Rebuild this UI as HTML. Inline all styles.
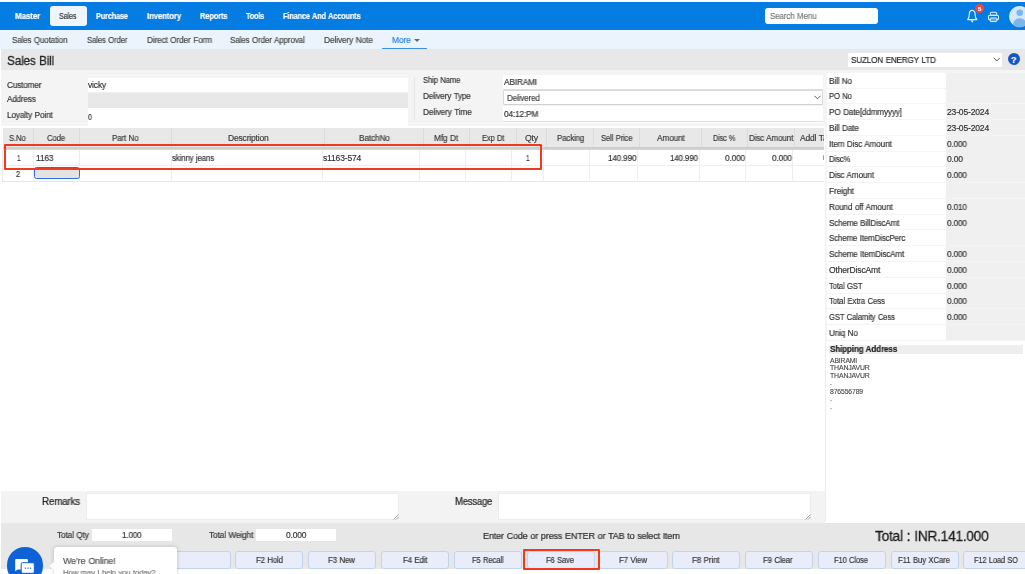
<!DOCTYPE html>
<html>
<head>
<meta charset="utf-8">
<title>Sales Bill</title>
<style>
*{box-sizing:border-box;margin:0;padding:0}
html,body{width:1025px;height:574px;overflow:hidden;background:#fff}
body{font-family:"Liberation Sans",sans-serif;font-size:9px;color:#3a3a3a;position:relative}
.a{position:absolute}
.t{position:absolute;white-space:nowrap;word-spacing:0.5px;transform-origin:0 50%;will-change:transform;-webkit-text-stroke:0.02em currentColor}
.btn{position:absolute;top:551.3px;width:68.3px;height:17.4px;background:#e8edf9;border:1px solid #c2d3f0;border-radius:3px}
.vb{position:absolute;top:128px;width:1px;height:19px;background:#dcdcdc}
.rb{position:absolute;top:149.8px;width:1px;height:32px;background:#eeeeee}
.rl{position:absolute;left:827.3px;width:118.7px;height:14.9px;background:#fff}
.rv{position:absolute;left:946px;width:79px;height:15.2px;background:#f0f0f0}

</style>
</head>
<body>
<div class="a" style="left:0;top:2px;width:1025px;height:27.8px;background:#047ce2"></div>
<div class="a" style="left:50px;top:6px;width:37px;height:20px;background:#eef5fd;border-radius:3px"></div>
<div class="a" style="left:765px;top:8px;width:113px;height:16px;background:#fff;border-radius:3px"></div>
<svg class="a" style="left:965px;top:8px" width="16" height="18" viewBox="0 0 16 18"><g transform="translate(0,2.4) scale(1,1.09) translate(0,-2.4)"><path d="M7.2 2.4 C4.9 2.4 4.2 4.6 4.2 6.6 C4.2 8.8 3.6 9.9 2.6 10.9 L11.8 10.9 C10.8 9.9 10.2 8.8 10.2 6.6 C10.2 4.6 9.5 2.4 7.2 2.4 Z" fill="none" stroke="#e6f0fb" stroke-width="1.1" stroke-linejoin="round"/><path d="M5.6 11.5 L7.2 13.7 L8.8 11.5 Z" fill="#e6f0fb"/></g></svg>
<div class="a" style="left:975.2px;top:4.1px;width:8.8px;height:8.8px;border-radius:50%;background:#f2453d"></div>
<svg class="a" style="left:987px;top:10px" width="14" height="14" viewBox="0 0 14 14"><rect x="3.4" y="2.3" width="6.2" height="3" rx="0.6" fill="none" stroke="#e6f0fb" stroke-width="1"/><rect x="1.5" y="5.3" width="10" height="4.4" rx="1.3" fill="none" stroke="#e6f0fb" stroke-width="1.1"/><rect x="3.2" y="8" width="6.6" height="3.6" rx="0.6" fill="#5aa3ea" stroke="#e6f0fb" stroke-width="1"/></svg>
<svg class="a" style="left:1009.3px;top:5.8px" width="16" height="22" viewBox="0 0 16 22"><defs><clipPath id="av"><circle cx="10.7" cy="10.6" r="10.6"/></clipPath></defs><circle cx="10.7" cy="10.6" r="10.6" fill="#d4e8fb"/><g clip-path="url(#av)"><circle cx="10.7" cy="6.8" r="3.3" fill="#7db6ef"/><ellipse cx="10.7" cy="17.9" rx="6.6" ry="5.6" fill="#7db6ef"/></g></svg>
<div class="a" style="left:0;top:29.8px;width:1025px;height:19.5px;background:#ebf4fc"></div>
<div class="a" style="left:413.5px;top:38.8px;width:0;height:0;border-left:3.1px solid transparent;border-right:3.1px solid transparent;border-top:3.3px solid #666b72"></div>
<div class="a" style="left:382.1px;top:47.7px;width:44.8px;height:1.4px;background:#3b8eea;border-radius:1px"></div>
<div class="a" style="left:1px;top:49.3px;width:1024px;height:21.1px;background:#e8e8e8"></div>
<div class="a" style="left:848px;top:52.9px;width:154px;height:14.1px;background:#fff;border-radius:1.5px"></div>
<svg class="a" style="left:993.4px;top:56.4px" width="8" height="7" viewBox="0 0 8 7"><path d="M0.8 1.8 L3.8 5 L6.8 1.8" fill="none" stroke="#4a4a4a" stroke-width="0.9"/></svg>
<div class="a" style="left:1007.8px;top:52.8px;width:12.4px;height:12.4px;border-radius:50%;background:#1457c8"></div>
<div class="a" style="left:1px;top:70.4px;width:824px;height:55.2px;background:#f4f4f4"></div>
<div class="a" style="left:87.8px;top:77.6px;width:320.6px;height:14.4px;background:#fff"></div>
<div class="a" style="left:87.8px;top:92px;width:320.6px;height:15.7px;background:#e8e8e8;border-top:1px solid #efefef"></div>
<div class="a" style="left:87.8px;top:107.7px;width:320.6px;height:17.9px;background:#fff"></div>
<div class="a" style="left:414.4px;top:76.9px;width:1px;height:42.8px;background:#e4e4e4"></div>
<div class="a" style="left:503px;top:74.5px;width:320.3px;height:15.3px;background:#fff;border-bottom:1.1px solid #dedede"></div>
<div class="a" style="left:503px;top:89.8px;width:320.3px;height:15.5px;background:#fff;border:1px solid #d8d8d8;border-bottom-color:#d0d0d0;border-radius:1.5px"></div>
<svg class="a" style="left:813.2px;top:94px" width="9" height="7" viewBox="0 0 9 7"><path d="M1.5 1.8 L4.5 4.9 L7.5 1.8" fill="none" stroke="#4a4a4a" stroke-width="0.9"/></svg>
<div class="a" style="left:503px;top:106.2px;width:320.3px;height:15.6px;background:#fff;border-bottom:1px solid #e0e0e0"></div>
<div class="a" style="left:503px;top:121.8px;width:320.3px;height:1.6px;background:#fff"></div>
<div class="a" style="left:2.6px;top:128px;width:821.4px;height:19px;background:#e8e8e8"></div>
<div class="vb" style="left:32.9px"></div>
<div class="vb" style="left:79.4px"></div>
<div class="vb" style="left:170.8px"></div>
<div class="vb" style="left:324.1px"></div>
<div class="vb" style="left:423.0px"></div>
<div class="vb" style="left:468.8px"></div>
<div class="vb" style="left:515.8px"></div>
<div class="vb" style="left:546.3px"></div>
<div class="vb" style="left:592.8px"></div>
<div class="vb" style="left:639.0px"></div>
<div class="vb" style="left:700.7px"></div>
<div class="vb" style="left:746.6px"></div>
<div class="vb" style="left:794.3px"></div>
<div class="a" style="left:2.6px;top:146.8px;width:821.4px;height:3px;background:linear-gradient(#cbcbcb,#d6d6d6)"></div>
<div class="a" style="left:2.2px;top:149.8px;width:821.8px;height:32.1px;background:#fff;border-left:1px solid #e8e8e8;border-bottom:1px solid #e6e6e6"></div>
<div class="a" style="left:2.6px;top:165.3px;width:821.4px;height:1px;background:#eeeeee"></div>
<div class="rb" style="left:32.9px"></div>
<div class="rb" style="left:79.4px"></div>
<div class="rb" style="left:170.8px"></div>
<div class="rb" style="left:321.9px"></div>
<div class="rb" style="left:419.1px"></div>
<div class="rb" style="left:465.3px"></div>
<div class="rb" style="left:511.1px"></div>
<div class="rb" style="left:543.1px"></div>
<div class="rb" style="left:589.3px"></div>
<div class="rb" style="left:637.0px"></div>
<div class="rb" style="left:698.8px"></div>
<div class="rb" style="left:745.2px"></div>
<div class="rb" style="left:792.0px"></div>
<div class="a" style="left:34.1px;top:166.8px;width:45.9px;height:12.7px;background:#e3e3e3;border:1.3px solid #2f6ddf;border-radius:2.5px"></div>
<div class="a" style="left:822.8px;top:155.2px;width:1.2px;height:4.4px;background:#9a9a9a;border-radius:1px"></div>
<div class="a" style="left:3.9px;top:144.2px;width:537.8px;height:25.6px;border:2px solid #f03a1f;border-radius:1px"></div>
<div class="a" style="left:825.4px;top:70.4px;width:199.6px;height:452.1px;background:#fff;border-left:1.6px solid #ededed"></div>
<div class="a" style="left:825.4px;top:70.4px;width:199.6px;height:271px;background:#f4f4f4"></div>
<div class="rl" style="top:72.7px"></div><div class="rv" style="top:72.5px"></div>
<div class="rl" style="top:88.5px"></div><div class="rv" style="top:88.3px"></div>
<div class="rl" style="top:104.2px"></div><div class="rv" style="top:104.0px"></div>
<div class="rl" style="top:120.0px"></div><div class="rv" style="top:119.8px"></div>
<div class="rl" style="top:135.8px"></div><div class="rv" style="top:135.6px"></div>
<div class="rl" style="top:151.6px"></div><div class="rv" style="top:151.4px"></div>
<div class="rl" style="top:167.3px"></div><div class="rv" style="top:167.1px"></div>
<div class="rl" style="top:183.1px"></div><div class="rv" style="top:182.9px"></div>
<div class="rl" style="top:198.9px"></div><div class="rv" style="top:198.7px"></div>
<div class="rl" style="top:214.6px"></div><div class="rv" style="top:214.4px"></div>
<div class="rl" style="top:230.4px"></div><div class="rv" style="top:230.2px"></div>
<div class="rl" style="top:246.2px"></div><div class="rv" style="top:246.0px"></div>
<div class="rl" style="top:261.9px"></div><div class="rv" style="top:261.7px"></div>
<div class="rl" style="top:277.7px"></div><div class="rv" style="top:277.5px"></div>
<div class="rl" style="top:293.5px"></div><div class="rv" style="top:293.3px"></div>
<div class="rl" style="top:309.2px"></div><div class="rv" style="top:309.1px"></div>
<div class="rl" style="top:325.0px"></div><div class="rv" style="top:324.8px"></div>
<div class="a" style="left:827.3px;top:341px;width:197.7px;height:3.4px;background:#fff"></div>
<div class="a" style="left:829px;top:344.6px;width:194.4px;height:9.7px;background:#eeeeee"></div>
<div class="a" style="left:1px;top:491.4px;width:824px;height:31.2px;background:#f3f3f3"></div>
<div class="a" style="left:85.5px;top:493.3px;width:313px;height:27.1px;background:#fff;border:1px solid #ededed"></div>
<div class="a" style="left:497.6px;top:493.3px;width:313.3px;height:27.1px;background:#fff;border:1px solid #ededed"></div>
<svg class="a" style="left:392.5px;top:514.2px" width="6" height="6" viewBox="0 0 6 6"><path d="M0.5 5.5 L5.5 0.5 M3 5.5 L5.5 3" stroke="#777" stroke-width="0.7" fill="none"/></svg>
<svg class="a" style="left:805px;top:514.2px" width="6" height="6" viewBox="0 0 6 6"><path d="M0.5 5.5 L5.5 0.5 M3 5.5 L5.5 3" stroke="#777" stroke-width="0.7" fill="none"/></svg>
<div class="a" style="left:1px;top:522.5px;width:1024px;height:46.9px;background:#e7e7e7"></div>
<div class="a" style="left:92px;top:529.4px;width:79.9px;height:11.4px;background:#fff"></div>
<div class="a" style="left:256.3px;top:529.4px;width:79.8px;height:11.4px;background:#fff"></div>
<div class="btn" style="left:162.4px"></div>
<div class="btn" style="left:235.2px"></div>
<div class="btn" style="left:308.0px"></div>
<div class="btn" style="left:380.9px"></div>
<div class="btn" style="left:453.7px"></div>
<div class="btn" style="left:526.5px"></div>
<div class="btn" style="left:599.3px"></div>
<div class="btn" style="left:672.1px"></div>
<div class="btn" style="left:745.0px"></div>
<div class="btn" style="left:817.8px"></div>
<div class="btn" style="left:890.6px"></div>
<div class="btn" style="left:963.4px"></div>
<div class="a" style="left:523.2px;top:549.3px;width:76.6px;height:21.1px;border:2px solid #f03a1f;border-radius:1px"></div>
<!-- text layer -->
<div class="t" id="x0" style="left:15.3px;top:10.0px;font-size:8.5px;line-height:12px;height:12px;color:#fff;letter-spacing:-0.17px;transform:scaleX(0.949);font-weight:bold">Master</div>
<div class="t" id="x1" style="left:59.3px;top:10.0px;font-size:8.5px;line-height:12px;height:12px;color:#333;letter-spacing:-0.17px;transform:scaleX(0.850)">Sales</div>
<div class="t" id="x2" style="left:96.0px;top:10.0px;font-size:8.5px;line-height:12px;height:12px;color:#fff;letter-spacing:-0.17px;transform:scaleX(0.863);font-weight:bold">Purchase</div>
<div class="t" id="x3" style="left:146.8px;top:10.0px;font-size:8.5px;line-height:12px;height:12px;color:#fff;letter-spacing:-0.17px;transform:scaleX(0.927);font-weight:bold">Inventory</div>
<div class="t" id="x4" style="left:199.8px;top:10.0px;font-size:8.5px;line-height:12px;height:12px;color:#fff;letter-spacing:-0.17px;transform:scaleX(0.887);font-weight:bold">Reports</div>
<div class="t" id="x5" style="left:246.3px;top:10.0px;font-size:8.5px;line-height:12px;height:12px;color:#fff;letter-spacing:-0.17px;transform:scaleX(0.842);font-weight:bold">Tools</div>
<div class="t" id="x6" style="left:283.0px;top:10.0px;font-size:8.5px;line-height:12px;height:12px;color:#fff;letter-spacing:-0.17px;transform:scaleX(0.871);font-weight:bold">Finance And Accounts</div>
<div class="t" id="x7" style="left:769.6px;top:10.0px;font-size:8.5px;line-height:12px;height:12px;color:#777;letter-spacing:-0.17px;transform:scaleX(0.946)">Search Menu</div>
<div class="t" id="x8" style="left:977.8px;top:5.0px;font-size:6px;line-height:8px;height:8px;color:#fff;letter-spacing:-0.12px;transform:scaleX(0.987);font-weight:bold">5</div>
<div class="t" id="x9" style="left:1011.1px;top:53.0px;font-size:9.5px;line-height:13px;height:13px;color:#fff;letter-spacing:-0.19px;transform:scaleX(0.929);font-weight:bold">?</div>
<div class="t" id="x10" style="left:12.3px;top:34.0px;font-size:8.5px;line-height:12px;height:12px;color:#444;letter-spacing:-0.17px;transform:scaleX(0.947)">Sales Quotation</div>
<div class="t" id="x11" style="left:86.8px;top:34.0px;font-size:8.5px;line-height:12px;height:12px;color:#444;letter-spacing:-0.17px;transform:scaleX(0.917)">Sales Order</div>
<div class="t" id="x12" style="left:146.8px;top:34.0px;font-size:8.5px;line-height:12px;height:12px;color:#444;letter-spacing:-0.17px;transform:scaleX(0.974)">Direct Order Form</div>
<div class="t" id="x13" style="left:230.0px;top:34.0px;font-size:8.5px;line-height:12px;height:12px;color:#444;letter-spacing:-0.17px;transform:scaleX(0.952)">Sales Order Approval</div>
<div class="t" id="x14" style="left:323.6px;top:34.0px;font-size:8.5px;line-height:12px;height:12px;color:#444;letter-spacing:-0.17px;transform:scaleX(0.990)">Delivery Note</div>
<div class="t" id="x15" style="left:391.6px;top:34.0px;font-size:8.5px;line-height:12px;height:12px;color:#2b82e6;letter-spacing:-0.17px;transform:scaleX(0.991)">More</div>
<div class="t" id="x16" style="left:6.7px;top:52.0px;font-size:13px;line-height:17px;height:17px;color:#222;letter-spacing:-0.26px;transform:scaleX(0.914)">Sales Bill</div>
<div class="t" id="x17" style="left:850.5px;top:54.0px;font-size:8.5px;line-height:12px;height:12px;color:#222;letter-spacing:-0.17px;transform:scaleX(0.958)">SUZLON ENERGY LTD</div>
<div class="t" id="x18" style="left:7.0px;top:79.0px;font-size:8.5px;line-height:12px;height:12px;color:#303030;letter-spacing:-0.17px;transform:scaleX(0.970)">Customer</div>
<div class="t" id="x19" style="left:7.0px;top:93.0px;font-size:8.5px;line-height:12px;height:12px;color:#303030;letter-spacing:-0.17px;transform:scaleX(0.955)">Address</div>
<div class="t" id="x20" style="left:7.0px;top:109.0px;font-size:8.5px;line-height:12px;height:12px;color:#303030;letter-spacing:-0.17px;transform:scaleX(0.970)">Loyalty Point</div>
<div class="t" id="x21" style="left:88.0px;top:79.0px;font-size:8.5px;line-height:12px;height:12px;color:#303030;letter-spacing:-0.17px;transform:scaleX(0.988)">vicky</div>
<div class="t" id="x22" style="left:88.1px;top:111.0px;font-size:8.5px;line-height:12px;height:12px;color:#303030;letter-spacing:-0.17px;transform:scaleX(0.824)">0</div>
<div class="t" id="x23" style="left:422.5px;top:74.0px;font-size:8.5px;line-height:12px;height:12px;color:#303030;letter-spacing:-0.17px;transform:scaleX(0.908)">Ship Name</div>
<div class="t" id="x24" style="left:422.5px;top:90.0px;font-size:8.5px;line-height:12px;height:12px;color:#303030;letter-spacing:-0.17px;transform:scaleX(0.960)">Delivery Type</div>
<div class="t" id="x25" style="left:422.5px;top:106.0px;font-size:8.5px;line-height:12px;height:12px;color:#303030;letter-spacing:-0.17px;transform:scaleX(0.977)">Delivery Time</div>
<div class="t" id="x26" style="left:503.5px;top:76.0px;font-size:8.5px;line-height:12px;height:12px;color:#303030;letter-spacing:-0.17px;transform:scaleX(0.975)">ABIRAMI</div>
<div class="t" id="x27" style="left:506.6px;top:92.0px;font-size:8.5px;line-height:12px;height:12px;color:#3c3c3c;letter-spacing:-0.17px;transform:scaleX(0.955)">Delivered</div>
<div class="t" id="x28" style="left:503.5px;top:108.0px;font-size:8.5px;line-height:12px;height:12px;color:#303030;letter-spacing:-0.17px;transform:scaleX(0.980)">04:12:PM</div>
<div class="t" id="x29" style="left:9.1px;top:132.0px;font-size:8.5px;line-height:12px;height:12px;color:#383838;letter-spacing:-0.17px;transform:scaleX(0.908)">S.No</div>
<div class="t" id="x30" style="left:46.9px;top:132.0px;font-size:8.5px;line-height:12px;height:12px;color:#383838;letter-spacing:-0.17px;transform:scaleX(0.918)">Code</div>
<div class="t" id="x31" style="left:112.2px;top:132.0px;font-size:8.5px;line-height:12px;height:12px;color:#383838;letter-spacing:-0.17px;transform:scaleX(0.943)">Part No</div>
<div class="t" id="x32" style="left:227.9px;top:132.0px;font-size:8.5px;line-height:12px;height:12px;color:#383838;letter-spacing:-0.17px;transform:scaleX(0.999)">Description</div>
<div class="t" id="x33" style="left:358.8px;top:132.0px;font-size:8.5px;line-height:12px;height:12px;color:#383838;letter-spacing:-0.17px;transform:scaleX(0.978)">BatchNo</div>
<div class="t" id="x34" style="left:434.3px;top:132.0px;font-size:8.5px;line-height:12px;height:12px;color:#383838;letter-spacing:-0.17px;transform:scaleX(0.981)">Mfg Dt</div>
<div class="t" id="x35" style="left:481.6px;top:132.0px;font-size:8.5px;line-height:12px;height:12px;color:#383838;letter-spacing:-0.17px;transform:scaleX(0.890)">Exp Dt</div>
<div class="t" id="x36" style="left:524.6px;top:132.0px;font-size:8.5px;line-height:12px;height:12px;color:#383838;letter-spacing:-0.17px;transform:scaleX(1.024)">Qty</div>
<div class="t" id="x37" style="left:556.5px;top:132.0px;font-size:8.5px;line-height:12px;height:12px;color:#383838;letter-spacing:-0.17px;transform:scaleX(0.934)">Packing</div>
<div class="t" id="x38" style="left:600.9px;top:132.0px;font-size:8.5px;line-height:12px;height:12px;color:#383838;letter-spacing:-0.17px;transform:scaleX(0.903)">Sell Price</div>
<div class="t" id="x39" style="left:656.5px;top:132.0px;font-size:8.5px;line-height:12px;height:12px;color:#383838;letter-spacing:-0.17px;transform:scaleX(0.977)">Amount</div>
<div class="t" id="x40" style="left:713.4px;top:132.0px;font-size:8.5px;line-height:12px;height:12px;color:#383838;letter-spacing:-0.17px;transform:scaleX(0.858)">Disc %</div>
<div class="t" id="x41" style="left:748.6px;top:132.0px;font-size:8.5px;line-height:12px;height:12px;color:#383838;letter-spacing:-0.17px;transform:scaleX(0.952)">Disc Amount</div>
<div class="t" id="x42" style="left:799.6px;top:132.0px;font-size:8.5px;line-height:12px;height:12px;color:#383838;letter-spacing:-0.17px;transform:scaleX(0.998);width:24.2px;overflow:hidden">Addl Tax</div>
<div class="t" id="x43" style="left:16.8px;top:152.0px;font-size:8.5px;line-height:12px;height:12px;color:#303030;letter-spacing:-0.17px;transform:scaleX(0.780)">1</div>
<div class="t" id="x44" style="left:35.5px;top:152.0px;font-size:8.5px;line-height:12px;height:12px;color:#303030;letter-spacing:-0.17px;transform:scaleX(0.985)">1163</div>
<div class="t" id="x45" style="left:172.1px;top:152.0px;font-size:8.5px;line-height:12px;height:12px;color:#303030;letter-spacing:-0.17px;transform:scaleX(0.927)">skinny jeans</div>
<div class="t" id="x46" style="left:323.3px;top:152.0px;font-size:8.5px;line-height:12px;height:12px;color:#303030;letter-spacing:-0.17px;transform:scaleX(1.003)">s1163-574</div>
<div class="t" id="x47" style="left:525.8px;top:152.0px;font-size:8.5px;line-height:12px;height:12px;color:#303030;letter-spacing:-0.17px;transform:scaleX(0.782)">1</div>
<div class="t" id="x48" style="left:607.8px;top:152.0px;font-size:8.5px;line-height:12px;height:12px;color:#303030;letter-spacing:-0.17px;transform:scaleX(0.959)">140.990</div>
<div class="t" id="x49" style="left:670.0px;top:152.0px;font-size:8.5px;line-height:12px;height:12px;color:#303030;letter-spacing:-0.17px;transform:scaleX(0.942)">140.990</div>
<div class="t" id="x50" style="left:724.7px;top:152.0px;font-size:8.5px;line-height:12px;height:12px;color:#303030;letter-spacing:-0.17px;transform:scaleX(0.981)">0.000</div>
<div class="t" id="x51" style="left:771.8px;top:152.0px;font-size:8.5px;line-height:12px;height:12px;color:#303030;letter-spacing:-0.17px;transform:scaleX(0.971)">0.000</div>
<div class="t" id="x52" style="left:16.1px;top:168.0px;font-size:8.5px;line-height:12px;height:12px;color:#303030;letter-spacing:-0.17px;transform:scaleX(0.887)">2</div>
<div class="t" id="x53" style="left:828.7px;top:75.0px;font-size:8.5px;line-height:12px;height:12px;color:#303030;letter-spacing:-0.17px;transform:scaleX(0.961)">Bill No</div>
<div class="t" id="x54" style="left:828.7px;top:90.0px;font-size:8.5px;line-height:12px;height:12px;color:#303030;letter-spacing:-0.17px;transform:scaleX(0.900)">PO No</div>
<div class="t" id="x55" style="left:828.7px;top:106.0px;font-size:8.5px;line-height:12px;height:12px;color:#303030;letter-spacing:-0.17px;transform:scaleX(0.965)">PO Date[ddmmyyyy]</div>
<div class="t" id="x56" style="left:946.9px;top:106.0px;font-size:8.5px;line-height:12px;height:12px;color:#303030;letter-spacing:-0.17px;transform:scaleX(1.006)">23-05-2024</div>
<div class="t" id="x57" style="left:828.7px;top:122.0px;font-size:8.5px;line-height:12px;height:12px;color:#303030;letter-spacing:-0.17px;transform:scaleX(0.974)">Bill Date</div>
<div class="t" id="x58" style="left:946.9px;top:122.0px;font-size:8.5px;line-height:12px;height:12px;color:#303030;letter-spacing:-0.17px;transform:scaleX(1.006)">23-05-2024</div>
<div class="t" id="x59" style="left:828.7px;top:138.0px;font-size:8.5px;line-height:12px;height:12px;color:#303030;letter-spacing:-0.17px;transform:scaleX(0.964)">Item Disc Amount</div>
<div class="t" id="x60" style="left:946.9px;top:138.0px;font-size:8.5px;line-height:12px;height:12px;color:#303030;letter-spacing:-0.17px;transform:scaleX(0.971)">0.000</div>
<div class="t" id="x61" style="left:828.7px;top:153.0px;font-size:8.5px;line-height:12px;height:12px;color:#303030;letter-spacing:-0.17px;transform:scaleX(0.918)">Disc%</div>
<div class="t" id="x62" style="left:946.9px;top:153.0px;font-size:8.5px;line-height:12px;height:12px;color:#303030;letter-spacing:-0.17px;transform:scaleX(1.004)">0.00</div>
<div class="t" id="x63" style="left:828.7px;top:169.0px;font-size:8.5px;line-height:12px;height:12px;color:#303030;letter-spacing:-0.17px;transform:scaleX(0.967)">Disc Amount</div>
<div class="t" id="x64" style="left:946.9px;top:169.0px;font-size:8.5px;line-height:12px;height:12px;color:#303030;letter-spacing:-0.17px;transform:scaleX(0.971)">0.000</div>
<div class="t" id="x65" style="left:828.7px;top:185.0px;font-size:8.5px;line-height:12px;height:12px;color:#303030;letter-spacing:-0.17px;transform:scaleX(0.982)">Freight</div>
<div class="t" id="x66" style="left:828.7px;top:201.0px;font-size:8.5px;line-height:12px;height:12px;color:#303030;letter-spacing:-0.17px;transform:scaleX(0.961)">Round off Amount</div>
<div class="t" id="x67" style="left:946.9px;top:201.0px;font-size:8.5px;line-height:12px;height:12px;color:#303030;letter-spacing:-0.17px;transform:scaleX(0.971)">0.010</div>
<div class="t" id="x68" style="left:828.7px;top:217.0px;font-size:8.5px;line-height:12px;height:12px;color:#303030;letter-spacing:-0.17px;transform:scaleX(0.950)">Scheme BillDiscAmt</div>
<div class="t" id="x69" style="left:946.9px;top:217.0px;font-size:8.5px;line-height:12px;height:12px;color:#303030;letter-spacing:-0.17px;transform:scaleX(0.971)">0.000</div>
<div class="t" id="x70" style="left:828.7px;top:232.0px;font-size:8.5px;line-height:12px;height:12px;color:#303030;letter-spacing:-0.17px;transform:scaleX(0.937)">Scheme ItemDiscPerc</div>
<div class="t" id="x71" style="left:828.7px;top:248.0px;font-size:8.5px;line-height:12px;height:12px;color:#303030;letter-spacing:-0.17px;transform:scaleX(0.948)">Scheme ItemDiscAmt</div>
<div class="t" id="x72" style="left:946.9px;top:248.0px;font-size:8.5px;line-height:12px;height:12px;color:#303030;letter-spacing:-0.17px;transform:scaleX(0.971)">0.000</div>
<div class="t" id="x73" style="left:828.7px;top:264.0px;font-size:8.5px;line-height:12px;height:12px;color:#303030;letter-spacing:-0.17px;transform:scaleX(1.007)">OtherDiscAmt</div>
<div class="t" id="x74" style="left:946.9px;top:264.0px;font-size:8.5px;line-height:12px;height:12px;color:#303030;letter-spacing:-0.17px;transform:scaleX(0.971)">0.000</div>
<div class="t" id="x75" style="left:828.7px;top:280.0px;font-size:8.5px;line-height:12px;height:12px;color:#303030;letter-spacing:-0.17px;transform:scaleX(0.907)">Total GST</div>
<div class="t" id="x76" style="left:946.9px;top:280.0px;font-size:8.5px;line-height:12px;height:12px;color:#303030;letter-spacing:-0.17px;transform:scaleX(0.971)">0.000</div>
<div class="t" id="x77" style="left:828.7px;top:295.0px;font-size:8.5px;line-height:12px;height:12px;color:#303030;letter-spacing:-0.17px;transform:scaleX(0.928)">Total Extra Cess</div>
<div class="t" id="x78" style="left:946.9px;top:295.0px;font-size:8.5px;line-height:12px;height:12px;color:#303030;letter-spacing:-0.17px;transform:scaleX(0.971)">0.000</div>
<div class="t" id="x79" style="left:828.7px;top:311.0px;font-size:8.5px;line-height:12px;height:12px;color:#303030;letter-spacing:-0.17px;transform:scaleX(0.906)">GST Calamity Cess</div>
<div class="t" id="x80" style="left:946.9px;top:311.0px;font-size:8.5px;line-height:12px;height:12px;color:#303030;letter-spacing:-0.17px;transform:scaleX(0.971)">0.000</div>
<div class="t" id="x81" style="left:828.7px;top:327.0px;font-size:8.5px;line-height:12px;height:12px;color:#303030;letter-spacing:-0.17px;transform:scaleX(0.954)">Uniq No</div>
<div class="t" id="x82" style="left:829.9px;top:343.0px;font-size:8.5px;line-height:12px;height:12px;color:#1a1a1a;letter-spacing:-0.17px;transform:scaleX(0.955);font-weight:bold">Shipping Address</div>
<div class="t" id="x83" style="left:829.9px;top:356.0px;font-size:6.8px;line-height:9px;height:9px;color:#4a4a4a;letter-spacing:-0.14px;transform:scaleX(1.006)">ABIRAMI</div>
<div class="t" id="x84" style="left:829.9px;top:363.0px;font-size:6.8px;line-height:9px;height:9px;color:#4a4a4a;letter-spacing:-0.14px;transform:scaleX(1.018)">THANJAVUR</div>
<div class="t" id="x85" style="left:829.9px;top:371.0px;font-size:6.8px;line-height:9px;height:9px;color:#4a4a4a;letter-spacing:-0.14px;transform:scaleX(1.018)">THANJAVUR</div>
<div class="t" id="x86" style="left:829.9px;top:379.0px;font-size:6.8px;line-height:9px;height:9px;color:#4a4a4a;letter-spacing:-0.14px;transform:scaleX(0.780)">-</div>
<div class="t" id="x87" style="left:829.9px;top:387.0px;font-size:6.8px;line-height:9px;height:9px;color:#4a4a4a;letter-spacing:-0.14px;transform:scaleX(1.008)">876556789</div>
<div class="t" id="x88" style="left:829.9px;top:395.0px;font-size:6.8px;line-height:9px;height:9px;color:#4a4a4a;letter-spacing:-0.14px;transform:scaleX(0.780)">-</div>
<div class="t" id="x89" style="left:829.9px;top:403.0px;font-size:6.8px;line-height:9px;height:9px;color:#4a4a4a;letter-spacing:-0.14px;transform:scaleX(0.780)">-</div>
<div class="t" id="x90" style="left:42.4px;top:495.0px;font-size:10px;line-height:13px;height:13px;color:#222;letter-spacing:-0.20px;transform:scaleX(0.982)">Remarks</div>
<div class="t" id="x91" style="left:454.9px;top:495.0px;font-size:10px;line-height:13px;height:13px;color:#222;letter-spacing:-0.20px;transform:scaleX(0.950)">Message</div>
<div class="t" id="x92" style="left:57.4px;top:529.0px;font-size:8.5px;line-height:12px;height:12px;color:#303030;letter-spacing:-0.17px;transform:scaleX(0.976)">Total Qty</div>
<div class="t" id="x93" style="left:122.1px;top:529.0px;font-size:8.5px;line-height:12px;height:12px;color:#303030;letter-spacing:-0.17px;transform:scaleX(0.956)">1.000</div>
<div class="t" id="x94" style="left:209.1px;top:529.0px;font-size:8.5px;line-height:12px;height:12px;color:#303030;letter-spacing:-0.17px;transform:scaleX(0.981)">Total Weight</div>
<div class="t" id="x95" style="left:285.8px;top:529.0px;font-size:8.5px;line-height:12px;height:12px;color:#303030;letter-spacing:-0.17px;transform:scaleX(0.995)">0.000</div>
<div class="t" id="x96" style="left:483.0px;top:529.0px;font-size:9.5px;line-height:13px;height:13px;color:#2a2a2a;letter-spacing:-0.19px;transform:scaleX(0.955)">Enter Code or press ENTER or TAB to select Item</div>
<div class="t" id="x97" style="left:874.5px;top:526.0px;font-size:15px;line-height:19px;height:19px;color:#1c1c1c;letter-spacing:-0.30px;transform:scaleX(0.917)">Total : INR.141.000</div>
<div class="t" id="x98" style="left:255.8px;top:554.0px;font-size:8.5px;line-height:12px;height:12px;color:#333;letter-spacing:-0.17px;transform:scaleX(0.923)">F2 Hold</div>
<div class="t" id="x99" style="left:328.3px;top:554.0px;font-size:8.5px;line-height:12px;height:12px;color:#333;letter-spacing:-0.17px;transform:scaleX(0.933)">F3 New</div>
<div class="t" id="x100" style="left:402.8px;top:554.0px;font-size:8.5px;line-height:12px;height:12px;color:#333;letter-spacing:-0.17px;transform:scaleX(0.927)">F4 Edit</div>
<div class="t" id="x101" style="left:471.8px;top:554.0px;font-size:8.5px;line-height:12px;height:12px;color:#333;letter-spacing:-0.17px;transform:scaleX(0.899)">F5 Recall</div>
<div class="t" id="x102" style="left:546.3px;top:554.0px;font-size:8.5px;line-height:12px;height:12px;color:#333;letter-spacing:-0.17px;transform:scaleX(0.899)">F6 Save</div>
<div class="t" id="x103" style="left:618.8px;top:554.0px;font-size:8.5px;line-height:12px;height:12px;color:#333;letter-spacing:-0.17px;transform:scaleX(0.932)">F7 View</div>
<div class="t" id="x104" style="left:691.8px;top:554.0px;font-size:8.5px;line-height:12px;height:12px;color:#333;letter-spacing:-0.17px;transform:scaleX(0.946)">F8 Print</div>
<div class="t" id="x105" style="left:763.3px;top:554.0px;font-size:8.5px;line-height:12px;height:12px;color:#333;letter-spacing:-0.17px;transform:scaleX(0.925)">F9 Clear</div>
<div class="t" id="x106" style="left:834.3px;top:554.0px;font-size:8.5px;line-height:12px;height:12px;color:#333;letter-spacing:-0.17px;transform:scaleX(0.897)">F10 Close</div>
<div class="t" id="x107" style="left:897.8px;top:554.0px;font-size:8.5px;line-height:12px;height:12px;color:#333;letter-spacing:-0.17px;transform:scaleX(0.921)">F11 Buy XCare</div>
<div class="t" id="x108" style="left:974.3px;top:554.0px;font-size:8.5px;line-height:12px;height:12px;color:#333;letter-spacing:-0.17px;transform:scaleX(0.882)">F12 Load SO</div>
<div class="a" style="left:6.5px;top:547.2px;width:36.5px;height:36.5px;border-radius:50%;background:#0d62d6"></div>
<svg class="a" style="left:12px;top:556px" width="26" height="18" viewBox="12 556 26 18"><path d="M16.2 559.1 h10.7 a1 1 0 0 1 1 1 v8.3 a1 1 0 0 1 -1 1 h-9.2 l-2.5 1.9 v-11.2 a1 1 0 0 1 1 -1z" fill="#fff"/><rect x="21.2" y="562.7" width="13.1" height="10.6" rx="1.3" fill="#fff" stroke="#0d62d6" stroke-width="1"/><rect x="24.8" y="567.6" width="1.3" height="1.1" fill="#0d62d6"/><rect x="27.3" y="567.6" width="1.3" height="1.1" fill="#0d62d6"/><rect x="29.8" y="567.6" width="1.3" height="1.1" fill="#0d62d6"/></svg>
<div class="a" style="left:54.3px;top:547px;width:123.2px;height:30px;background:#fff;border-radius:3px;box-shadow:0 0 4px rgba(0,0,0,0.2)"></div>
<div class="a" style="left:51.2px;top:562.6px;width:6px;height:6px;background:#fff;transform:rotate(45deg)"></div>
<div class="t" id="x1000" style="left:63.2px;top:554.0px;font-size:9.5px;line-height:13px;height:13px;color:#555;letter-spacing:-0.19px;transform:scaleX(0.949)">We’re Online!</div>
<div class="t" id="x1001" style="left:63.2px;top:567.0px;font-size:8px;line-height:11px;height:11px;color:#777;letter-spacing:-0.16px;transform:scaleX(0.973)">How may I help you today?</div>
</body>
</html>
